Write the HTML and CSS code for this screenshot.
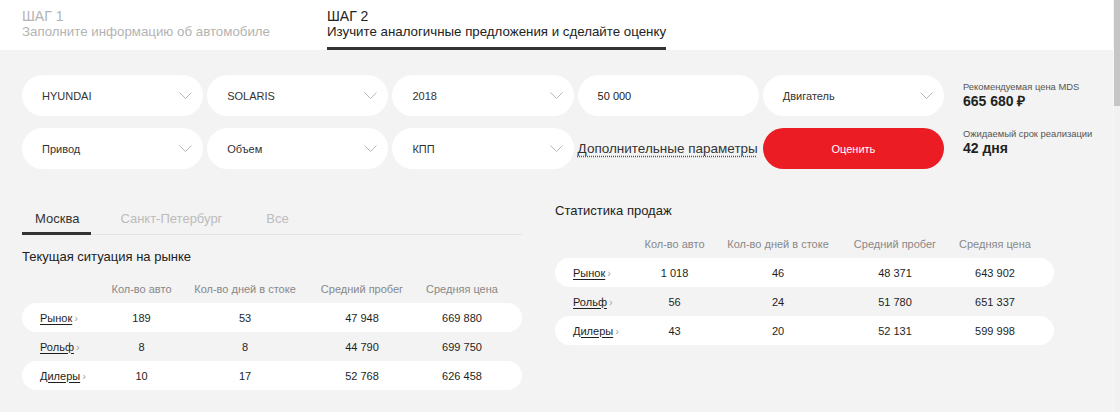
FILE: index.html
```html
<!DOCTYPE html>
<html lang="ru">
<head>
<meta charset="utf-8">
<title>Оценка автомобиля</title>
<link rel="stylesheet" href="styles.css">
</head>
<body>
<div class="app">
  <div class="page">
    <header class="steps">
      <div class="step">
        <div class="step-num">ШАГ 1</div>
        <div class="step-text">Заполните информацию об автомобиле</div>
      </div>
      <div class="step step-active">
        <div class="step-num">ШАГ 2</div>
        <div class="step-text">Изучите аналогичные предложения и сделайте оценку</div>
      </div>
    </header>

    <main class="main">
      <section class="top">
        <div class="form">
          <div class="field"><span>HYUNDAI</span><svg class="chev" viewBox="0 0 13 7"><path d="M0.5 0.5L6.5 6.5L12.5 0.5"/></svg></div>
          <div class="field"><span>SOLARIS</span><svg class="chev" viewBox="0 0 13 7"><path d="M0.5 0.5L6.5 6.5L12.5 0.5"/></svg></div>
          <div class="field"><span>2018</span><svg class="chev" viewBox="0 0 13 7"><path d="M0.5 0.5L6.5 6.5L12.5 0.5"/></svg></div>
          <div class="field field-input"><span>50 000</span></div>
          <div class="field"><span>Двигатель</span><svg class="chev" viewBox="0 0 13 7"><path d="M0.5 0.5L6.5 6.5L12.5 0.5"/></svg></div>
          <div class="field"><span>Привод</span><svg class="chev" viewBox="0 0 13 7"><path d="M0.5 0.5L6.5 6.5L12.5 0.5"/></svg></div>
          <div class="field"><span>Объем</span><svg class="chev" viewBox="0 0 13 7"><path d="M0.5 0.5L6.5 6.5L12.5 0.5"/></svg></div>
          <div class="field"><span>КПП</span><svg class="chev" viewBox="0 0 13 7"><path d="M0.5 0.5L6.5 6.5L12.5 0.5"/></svg></div>
          <div class="more"><span class="more-link">Дополнительные параметры</span></div>
          <div class="btn">Оценить</div>
        </div>
        <div class="info">
          <div class="info-item">
            <div class="info-label">Рекомендуемая цена MDS</div>
            <div class="info-value">665 680 ₽</div>
          </div>
          <div class="info-item">
            <div class="info-label">Ожидаемый срок реализации</div>
            <div class="info-value">42 дня</div>
          </div>
        </div>
      </section>

      <section class="bottom">
        <div class="col col-left">
          <nav class="tabs">
            <span class="tab tab-active">Москва</span>
            <span class="tab">Санкт-Петербург</span>
            <span class="tab">Все</span>
          </nav>
          <h3 class="title title-left">Текущая ситуация на рынке</h3>
          <div class="table">
            <div class="thead">
              <span></span><span>Кол-во авто</span><span>Кол-во дней в стоке</span><span>Средний пробег</span><span>Средняя цена</span>
            </div>
            <div class="trow">
              <span class="label"><u>Рынок</u><i class="arr">›</i></span><span>189</span><span>53</span><span>47 948</span><span>669 880</span>
            </div>
            <div class="trow">
              <span class="label"><u>Рольф</u><i class="arr">›</i></span><span>8</span><span>8</span><span>44 790</span><span>699 750</span>
            </div>
            <div class="trow">
              <span class="label"><u>Дилеры</u><i class="arr">›</i></span><span>10</span><span>17</span><span>52 768</span><span>626 458</span>
            </div>
          </div>
        </div>

        <div class="col col-right">
          <h3 class="title title-right">Статистика продаж</h3>
          <div class="table">
            <div class="thead">
              <span></span><span>Кол-во авто</span><span>Кол-во дней в стоке</span><span>Средний пробег</span><span>Средняя цена</span>
            </div>
            <div class="trow">
              <span class="label"><u>Рынок</u><i class="arr">›</i></span><span>1 018</span><span>46</span><span>48 371</span><span>643 902</span>
            </div>
            <div class="trow">
              <span class="label"><u>Рольф</u><i class="arr">›</i></span><span>56</span><span>24</span><span>51 780</span><span>651 337</span>
            </div>
            <div class="trow">
              <span class="label"><u>Дилеры</u><i class="arr">›</i></span><span>43</span><span>20</span><span>52 131</span><span>599 998</span>
            </div>
          </div>
        </div>
      </section>
    </main>
  </div>
  <div class="scrollbar"><div class="thumb"></div></div>
</div>
</body>
</html>
```

FILE: styles.css
```css
* { box-sizing: border-box; }

html, body {
  margin: 0;
  padding: 0;
  height: 412px;
  overflow: hidden;
}

body {
  font-family: "Liberation Sans", Arial, sans-serif;
  color: #222;
  background: #f3f3f3;
}

.app {
  display: flex;
  height: 412px;
}

.page {
  flex: 1;
  min-width: 0;
  background: #f3f3f3;
  overflow: hidden;
}

.scrollbar {
  width: 7px;
  flex-shrink: 0;
  background: #f1f1f1;
  border-left: 1px solid #f7f7f7;
}

.thumb {
  height: 106px;
  background: #c6c6c6;
}

/* Steps header */
.steps {
  height: 50px;
  background: #fff;
  display: flex;
  gap: 57px;
  padding-left: 22px;
}

.step {
  padding: 8px 0 7px;
  border-bottom: 3px solid transparent;
  font-size: 13.3px;
  line-height: 16px;
  color: #b3b3b3;
  white-space: nowrap;
}

.step-num {
  font-size: 14px;
}

.step-active {
  color: #222;
  border-bottom-color: #333;
}

/* Main */
.main {
  padding: 25px 22px 0;
}

.top {
  display: flex;
  align-items: flex-start;
}

.form {
  width: 922px;
  flex-shrink: 0;
  display: grid;
  grid-template-columns: repeat(5, 1fr);
  grid-auto-rows: 41px;
  column-gap: 4px;
  row-gap: 12px;
}

.field {
  background: #fff;
  border-radius: 21px;
  padding: 0 11px 0 20px;
  display: flex;
  align-items: center;
  justify-content: space-between;
  font-size: 11px;
  color: #333;
}

.field-input span {
  color: #1a1a1a;
}

.chev {
  width: 13px;
  height: 7px;
  fill: none;
  stroke: #b8b8b8;
  stroke-width: 1;
}

.more {
  display: flex;
  align-items: center;
  font-size: 13.5px;
  color: #333;
  white-space: nowrap;
}

.more-link {
  text-decoration: underline dotted #555;
  text-underline-offset: 3px;
}

.btn {
  background: #ec1c24;
  color: #fff;
  border-radius: 21px;
  display: flex;
  align-items: center;
  justify-content: center;
  font-size: 11px;
}

.info {
  margin-left: 19px;
  padding-top: 5px;
  white-space: nowrap;
}

.info-item + .info-item {
  margin-top: 18px;
}

.info-label {
  font-size: 9.4px;
  line-height: 13px;
  color: #555;
}

.info-value {
  font-size: 14px;
  line-height: 16px;
  font-weight: bold;
  color: #222;
}

/* Bottom */
.bottom {
  display: flex;
  gap: 33px;
  margin-top: 34px;
}

.col-left {
  width: 500px;
  flex-shrink: 0;
}

.col-right {
  width: 499px;
  flex-shrink: 0;
}

.tabs {
  display: flex;
  gap: 19px;
  padding-top: 8px;
  border-bottom: 1px solid #e4e4e4;
}

.tab {
  padding: 0 12px 5px 13px;
  margin-bottom: -1px;
  border-bottom: 3px solid transparent;
  font-size: 13px;
  line-height: 16px;
  color: #bcbcbc;
}

.tab:first-child + .tab {
  margin-left: -3px;
}

.tab-active {
  color: #333;
  border-bottom-color: #333;
}

.title {
  margin: 0;
  font-size: 13px;
  line-height: 16px;
  font-weight: normal;
  color: #222;
}

.title-left {
  margin-top: 14px;
}

.thead, .trow {
  display: grid;
  grid-template-columns: 78px 83px 124px 110px 90px 1fr;
  align-items: center;
  text-align: center;
}

.thead {
  margin-top: 17px;
  margin-bottom: 7px;
  font-size: 11px;
  line-height: 14px;
  color: #888;
  white-space: nowrap;
}

.col-right .thead {
  margin-top: 18px;
  margin-bottom: 7px;
}

.trow {
  height: 29px;
  border-radius: 15px;
  font-size: 11px;
  color: #1e1e1e;
}

.trow:nth-child(even) {
  background: #fff;
}

.label {
  text-align: left;
  padding-left: 18px;
  white-space: nowrap;
}

.label u {
  text-decoration: underline;
  text-underline-offset: 2px;
}

.arr {
  font-style: normal;
  color: #a5a5a5;
  margin-left: 2px;
}
```
